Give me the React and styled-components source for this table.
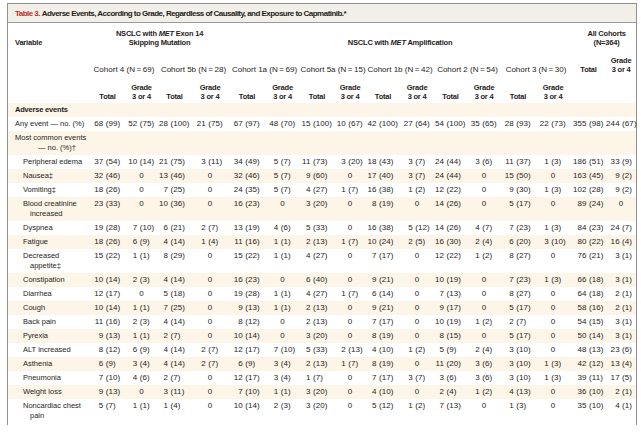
import React from "react";
import styled, { createGlobalStyle } from "styled-components";

const GlobalStyle = createGlobalStyle`
  html, body {
    margin: 0;
    padding: 0;
    background: #ffffff;
  }
  body {
    font-family: "Liberation Sans", Arial, sans-serif;
    color: #1f1c1b;
  }
`;

const Frame = styled.div`
  margin: 3px 4px 0 7px;
  border: 1px solid #8f8f8f;
  border-bottom: none;
  padding-bottom: 2px;
`;

const TitleBar = styled.div`
  height: 18px;
  display: flex;
  align-items: center;
  padding-left: 7px;
  background: #f2efe9;
  border-bottom: 1px solid #9b9b9b;
  font-size: 8px;
  font-weight: 700;
  letter-spacing: -0.53px;
  white-space: nowrap;
`;

const TableNo = styled.span`
  color: #c0302a;
`;

const Table = styled.table`
  width: 628px;
  table-layout: fixed;
  border-collapse: collapse;
  border-spacing: 0;
`;

const HeadRow = styled.tr`
  height: ${(p) => p.$h}px;
`;

const Th = styled.th`
  padding: 0 0 ${(p) => p.$pb}px ${(p) => p.$pl || 0}px;
  vertical-align: bottom;
  text-align: ${(p) => p.$align || "center"};
  font-size: ${(p) => (p.$light ? 8 : 7.5)}px;
  font-weight: ${(p) => (p.$light ? 400 : 700)};
  letter-spacing: ${(p) => (p.$light ? 0 : -0.2)}px;
  line-height: 9px;
  white-space: nowrap;
`;

const Row = styled.tr`
  background: ${(p) => (p.$shade ? "#fdf5e8" : "#ffffff")};
`;

const LabelCell = styled.td`
  padding: 2px 0 2px ${(p) => p.$indent}px;
  vertical-align: top;
  font-size: 7.5px;
  line-height: 10px;
  font-weight: ${(p) => (p.$bold ? 700 : 400)};
  letter-spacing: ${(p) => (p.$bold ? -0.2 : 0)}px;
  white-space: nowrap;
`;

const Line = styled.span`
  display: block;
  margin-left: ${(p) => p.$hang || 0}px;
`;

const ValueCell = styled.td`
  padding: 2px 0;
  vertical-align: top;
  text-align: center;
  font-size: 8px;
  letter-spacing: 0.1px;
  line-height: 10px;
  white-space: nowrap;
`;

const Pair = styled.span`
  display: inline-block;
  text-align: left;
  width: ${(p) => p.$w}px;
`;

const Num = styled.span`
  display: inline-block;
  text-align: right;
  width: ${(p) => p.$w}px;
`;

const COLS = [82, 35, 33, 33, 38, 36, 35, 34, 32, 34, 34, 33, 34, 34, 36, 35, 30];

const cohorts = [
  "Cohort 4 (N\u2009=\u200969)",
  "Cohort 5b (N\u2009=\u200928)",
  "Cohort 1a (N\u2009=\u200969)",
  "Cohort 5a (N\u2009=\u200915)",
  "Cohort 1b (N\u2009=\u200942)",
  "Cohort 2 (N\u2009=\u200954)",
  "Cohort 3 (N\u2009=\u200930)",
];

const rows = [
  { lines: ["Adverse events"], bold: true, indent: 7 },
  {
    lines: ["Any event \u2014 no. (%)"],
    indent: 7,
    vals: "68 (99)|52 (75)|28 (100)|21 (75)|67 (97)|48 (70)|15 (100)|10 (67)|42 (100)|27 (64)|54 (100)|35 (65)|28 (93)|22 (73)|355 (98)|244 (67)",
  },
  { lines: ["Most common events", "\u2014 no. (%)\u2020"], indent: 7, hang: 23 },
  {
    lines: ["Peripheral edema"],
    vals: "37 (54)|10 (14)|21 (75)|3 (11)|34 (49)|5 (7)|11 (73)|3 (20)|18 (43)|3 (7)|24 (44)|3 (6)|11 (37)|1 (3)|186 (51)|33 (9)",
  },
  {
    lines: ["Nausea\u2021"],
    vals: "32 (46)|0|13 (46)|0|32 (46)|5 (7)|9 (60)|0|17 (40)|3 (7)|24 (44)|0|15 (50)|0|163 (45)|9 (2)",
  },
  {
    lines: ["Vomiting\u2021"],
    vals: "18 (26)|0|7 (25)|0|24 (35)|5 (7)|4 (27)|1 (7)|16 (38)|1 (2)|12 (22)|0|9 (30)|1 (3)|102 (28)|9 (2)",
  },
  {
    lines: ["Blood creatinine", "increased"],
    vals: "23 (33)|0|10 (36)|0|16 (23)|0|3 (20)|0|8 (19)|0|14 (26)|0|5 (17)|0|89 (24)|0",
  },
  {
    lines: ["Dyspnea"],
    vals: "19 (28)|7 (10)|6 (21)|2 (7)|13 (19)|4 (6)|5 (33)|0|16 (38)|5 (12)|14 (26)|4 (7)|7 (23)|1 (3)|84 (23)|24 (7)",
  },
  {
    lines: ["Fatigue"],
    vals: "18 (26)|6 (9)|4 (14)|1 (4)|11 (16)|1 (1)|2 (13)|1 (7)|10 (24)|2 (5)|16 (30)|2 (4)|6 (20)|3 (10)|80 (22)|16 (4)",
  },
  {
    lines: ["Decreased", "appetite\u2021"],
    vals: "15 (22)|1 (1)|8 (29)|0|15 (22)|1 (1)|4 (27)|0|7 (17)|0|12 (22)|1 (2)|8 (27)|0|76 (21)|3 (1)",
  },
  {
    lines: ["Constipation"],
    vals: "10 (14)|2 (3)|4 (14)|0|16 (23)|0|6 (40)|0|9 (21)|0|10 (19)|0|7 (23)|1 (3)|66 (18)|3 (1)",
  },
  {
    lines: ["Diarrhea"],
    vals: "12 (17)|0|5 (18)|0|19 (28)|1 (1)|4 (27)|1 (7)|6 (14)|0|7 (13)|0|8 (27)|0|64 (18)|2 (1)",
  },
  {
    lines: ["Cough"],
    vals: "10 (14)|1 (1)|7 (25)|0|9 (13)|1 (1)|2 (13)|0|9 (21)|0|9 (17)|0|5 (17)|0|58 (16)|2 (1)",
  },
  {
    lines: ["Back pain"],
    vals: "11 (16)|2 (3)|4 (14)|0|8 (12)|0|2 (13)|0|7 (17)|0|10 (19)|1 (2)|2 (7)|0|54 (15)|3 (1)",
  },
  {
    lines: ["Pyrexia"],
    vals: "9 (13)|1 (1)|2 (7)|0|10 (14)|0|3 (20)|0|8 (19)|0|8 (15)|0|5 (17)|0|50 (14)|3 (1)",
  },
  {
    lines: ["ALT increased"],
    vals: "8 (12)|6 (9)|4 (14)|2 (7)|12 (17)|7 (10)|5 (33)|2 (13)|4 (10)|1 (2)|5 (9)|2 (4)|3 (10)|0|48 (13)|23 (6)",
  },
  {
    lines: ["Asthenia"],
    vals: "6 (9)|3 (4)|4 (14)|2 (7)|6 (9)|3 (4)|2 (13)|1 (7)|8 (19)|0|11 (20)|3 (6)|3 (10)|1 (3)|42 (12)|13 (4)",
  },
  {
    lines: ["Pneumonia"],
    vals: "7 (10)|4 (6)|2 (7)|0|12 (17)|3 (4)|1 (7)|0|7 (17)|3 (7)|3 (6)|3 (6)|3 (10)|1 (3)|39 (11)|17 (5)",
  },
  {
    lines: ["Weight loss"],
    vals: "9 (13)|0|3 (11)|0|7 (10)|1 (1)|3 (20)|0|4 (10)|0|2 (4)|1 (2)|4 (13)|0|36 (10)|2 (1)",
  },
  {
    lines: ["Noncardiac chest", "pain"],
    vals: "5 (7)|1 (1)|1 (4)|0|10 (14)|2 (3)|3 (20)|0|5 (12)|1 (2)|7 (13)|0|1 (3)|0|35 (10)|4 (1)",
  },
].map((r) => ({
  indent: 15,
  hang: 7,
  ...r,
  vals: r.vals ? r.vals.split("|") : null,
}));

// widths for lining up the numbers on the parenthesis, taken from the data
const DIGIT = 8 * 0.556 + 0.1;
const PAREN = 8 * 0.333 + 0.1;
const SPACE = 8 * 0.278 + 0.1;

const columnFit = COLS.slice(1).map((_, c) => {
  let nd = 1;
  let pd = 1;
  rows.forEach((r) => {
    if (!r.vals) return;
    const m = r.vals[c].match(/^(\d+) \((\d+)\)$/);
    if (m) {
      nd = Math.max(nd, m[1].length);
      pd = Math.max(pd, m[2].length);
    }
  });
  const num = nd * DIGIT;
  return { num, pair: num + SPACE + 2 * PAREN + pd * DIGIT + 0.5 };
});

const Value = ({ v, fit }) => {
  const m = v.match(/^(\d+) (\(\d+\))$/);
  if (!m) return <ValueCell>{v}</ValueCell>;
  return (
    <ValueCell>
      <Pair $w={fit.pair}>
        <Num $w={fit.num}>{m[1]}</Num> {m[2]}
      </Pair>
    </ValueCell>
  );
};

const App = () => {
  return (
    <>
      <GlobalStyle />
      <Frame>
        <TitleBar>
          <TableNo>Table 3.</TableNo>&nbsp;Adverse Events, According to Grade, Regardless of
          Causality, and Exposure to Capmatinib.*
        </TitleBar>
        <Table>
          <colgroup>
            {COLS.map((w, i) => (
              <col key={i} style={{ width: w }} />
            ))}
          </colgroup>
          <thead>
            <HeadRow $h={25}>
              <Th $align="left" $pl={7} $pb={1.5}>
                Variable
              </Th>
              <Th colSpan={4} $pb={1.5}>
                NSCLC with <i>MET</i> Exon 14
                <br />
                Skipping Mutation
              </Th>
              <Th colSpan={10} $pb={1.5}>
                NSCLC with <i>MET</i> Amplification
              </Th>
              <Th colSpan={2} $pl={6} $pb={1.5}>
                All Cohorts
                <br />
                (N=364)
              </Th>
            </HeadRow>
            <HeadRow $h={26}>
              <Th $pb={0.5} />
              {cohorts.map((c) => (
                <Th key={c} colSpan={2} $light $pb={0.5}>
                  {c}
                </Th>
              ))}
              <Th $pb={0.5}>Total</Th>
              <Th $pb={0.5}>
                Grade
                <br />3 or 4
              </Th>
            </HeadRow>
            <HeadRow $h={29}>
              <Th $pb={2.5} />
              {cohorts.map((c) => (
                <React.Fragment key={c}>
                  <Th $pb={2.5}>Total</Th>
                  <Th $pb={2.5}>
                    Grade
                    <br />3 or 4
                  </Th>
                </React.Fragment>
              ))}
              <Th $pb={2.5} />
              <Th $pb={2.5} />
            </HeadRow>
          </thead>
          <tbody>
            {rows.map((r, i) => (
              <Row key={r.lines[0]} $shade={i % 2 === 0}>
                <LabelCell $indent={r.indent} $bold={r.bold}>
                  {r.lines.map((l, j) => (
                    <Line key={l} $hang={j > 0 ? r.hang : 0}>
                      {l}
                    </Line>
                  ))}
                </LabelCell>
                {COLS.slice(1).map((_, c) =>
                  r.vals ? (
                    <Value key={c} v={r.vals[c]} fit={columnFit[c]} />
                  ) : (
                    <ValueCell key={c} />
                  )
                )}
              </Row>
            ))}
          </tbody>
        </Table>
      </Frame>
    </>
  );
};

export default App;
